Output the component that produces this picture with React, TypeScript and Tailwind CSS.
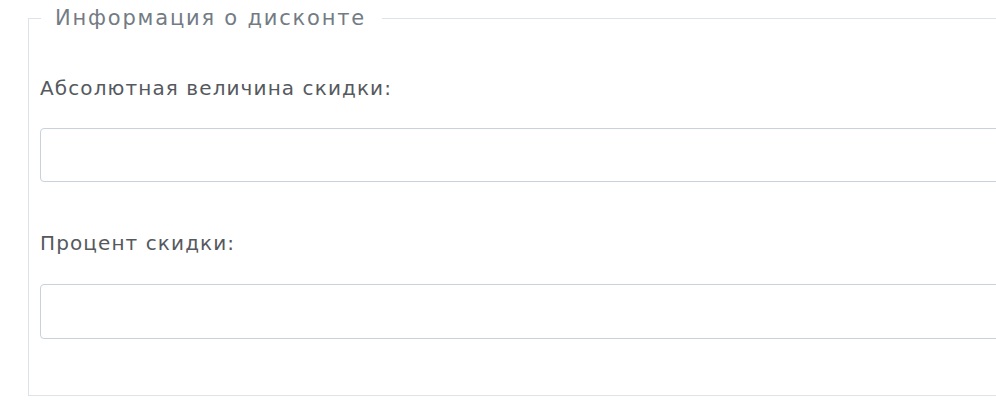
export default function App() {
  return (
    <div
      className="h-[402px] w-[996px] overflow-hidden bg-white pl-[28px] pt-0"
      style={{ fontFamily: '"DejaVu Sans", "Noto Sans", sans-serif' }}
    >
      <fieldset className="w-[1100px] border border-[#dde3e8] px-[11px] pb-[56px]">
        <legend className="ml-px pl-[14px] pr-[16px] text-[21px] leading-[36px] tracking-[1.8px] text-[#737b84]">
          Информация о дисконте
        </legend>

        <div className="mt-[38px]">
          <label className="block text-[20px] leading-[28px] tracking-[1.1px] text-[#55595e]">
            Абсолютная величина скидки:
          </label>
          <input
            type="text"
            className="mt-[26px] block h-[54px] w-full rounded-[4px] border border-[#c9d2da] bg-white px-3 outline-none"
          />
        </div>

        <div className="mt-[47px]">
          <label className="block text-[20px] leading-[28px] tracking-[1.1px] text-[#55595e]">
            Процент скидки:
          </label>
          <input
            type="text"
            className="mt-[27px] block h-[55px] w-full rounded-[4px] border border-[#c9d2da] bg-white px-3 outline-none"
          />
        </div>
      </fieldset>
    </div>
  );
}
